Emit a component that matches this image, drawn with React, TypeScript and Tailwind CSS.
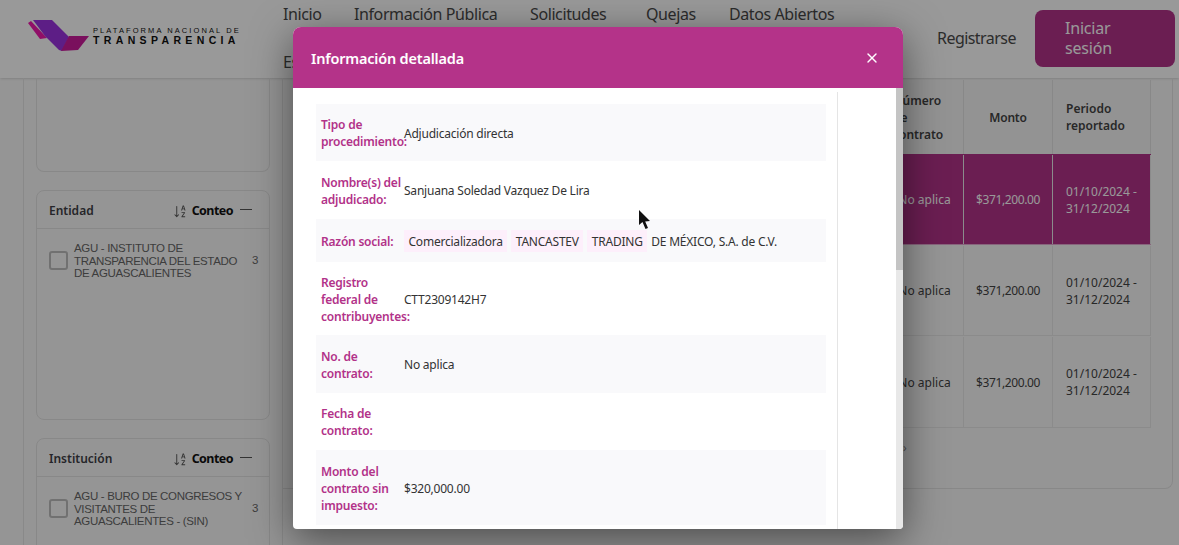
import { X } from "lucide-react";
import { BsSortAlphaDown } from "react-icons/bs";

const navItems = [
  { label: "Inicio", width: "w-[71px]" },
  { label: "Información Pública", width: "w-[176px]" },
  { label: "Solicitudes", width: "w-[116px]" },
  { label: "Quejas", width: "w-[83px]" },
  { label: "Datos Abiertos", width: "w-[120px]" },
  { label: "Es", width: "w-[120px]" },
];

const tableRows = [
  { selected: true, height: "h-[91px]" },
  { selected: false, height: "h-[91px]" },
  { selected: false, height: "h-[92px]" },
];

function Logo() {
  return (
    <div className="flex w-[283px] shrink-0 items-center pb-[6px] pl-[28px]">
      <svg width="62" height="34" viewBox="0 0 62 34" className="shrink-0">
        <polygon points="0,4 3,2 19,19 12,20" fill="#f01aae" />
        <polygon points="5,1 24,1 41,18 34,32 31,31 17,17" fill="#9c33e0" />
        <polygon points="41,17 61,17 50,31 33,32" fill="#cc1c9c" />
      </svg>
      <div className="pl-[3px] font-['Liberation_Sans',sans-serif] text-[#111]">
        <div className="text-[7.5px] leading-[9px] tracking-[2.08px]">PLATAFORMA NACIONAL DE</div>
        <div className="text-[10.5px] font-bold leading-[11px] tracking-[4.35px]">TRANSPARENCIA</div>
      </div>
    </div>
  );
}

function Header() {
  return (
    <header className="flex h-[78px] shrink-0 bg-white shadow-sm">
      <Logo />
      <nav className="flex w-[620px] shrink-0 flex-wrap content-start pt-[4px] text-[16px] leading-[20px] tracking-[-0.4px] text-[#4a4a4a]">
        {navItems.map((item) => (
          <a key={item.label} className={`${item.width} mb-[28px] whitespace-nowrap`}>
            {item.label}
          </a>
        ))}
      </nav>
      <div className="ml-[34px] flex w-[80px] items-center pb-[2px]">
        <span className="text-[16px] tracking-[-0.55px] text-[#4a4a4a]">Registrarse</span>
      </div>
      <div className="ml-[18px] pt-[10px]">
        <button className="h-[57px] w-[140px] rounded-lg bg-[#b23289] pb-[2px] pl-[30px] pr-[30px] text-left text-[16px] leading-[20px] tracking-[-0.2px] text-white">
          Iniciar sesión
        </button>
      </div>
    </header>
  );
}

function FilterCard({ title, item, height }: { title: string; item: string; height: string }) {
  return (
    <section className={`${height} shrink-0 rounded-lg border border-[#e3e3e3]`}>
      <div className="flex h-[38px] items-center border-b border-[#e3e3e3] pl-[12px] pr-[17px] pt-[3px] text-[12px] font-semibold text-[#3f3f46]">
        <span className="flex-1">{title}</span>
        <BsSortAlphaDown className="mr-[4px] size-[15px] text-[#555]" />
        <span className="text-[12.5px] font-bold tracking-[-0.55px] text-[#111]">Conteo</span>
        <span className="mb-[4px] ml-[7px] h-px w-[12px] bg-[#555]" />
      </div>
      <div className="flex items-center pl-[12px] pr-[11px] pt-[12px] font-['Liberation_Sans',sans-serif] text-[11.5px] leading-[12.5px] tracking-[-0.33px] text-[#666]">
        <span className="mr-[6px] size-[19px] shrink-0 rounded-[3px] border-2 border-[#bdbdbd]" />
        <span className="w-[172px] shrink-0 pt-[1px]">{item}</span>
        <span className="ml-auto">3</span>
      </div>
    </section>
  );
}

function Sidebar() {
  return (
    <aside className="flex w-[260px] shrink-0 flex-col gap-[18px] border-x border-[#e5e5e5] px-[12px]">
      <div className="h-[94px] shrink-0 rounded-b-lg border border-t-0 border-[#e3e3e3]" />
      <FilterCard
        title="Entidad"
        item="AGU - INSTITUTO DE TRANSPARENCIA DEL ESTADO DE AGUASCALIENTES"
        height="h-[230px]"
      />
      <FilterCard
        title="Institución"
        item="AGU - BURO DE CONGRESOS Y VISITANTES DE AGUASCALIENTES - (SIN)"
        height="h-[230px]"
      />
    </aside>
  );
}

function ResultsTable() {
  return (
    <main className="h-[411px] w-[890px] shrink-0 rounded-br-lg border-b border-r border-[#e3e3e3] pl-[22px] pt-[2px] font-['Noto_Sans',sans-serif] text-[12px] leading-[17px] text-[#444]">
      <div className="flex h-[74px] w-[846px] bg-[#f6f6f6] font-semibold">
        <div className="w-[581px] shrink-0" />
        <div className="flex w-[78px] items-center border-r border-[#e3e3e3] pl-[7px] pr-[14px]">Número de contrato</div>
        <div className="flex w-[89px] items-center justify-center border-r border-[#e3e3e3] tracking-[-0.2px]">Monto</div>
        <div className="flex w-[98px] items-center border-r border-[#e3e3e3] pl-[13px]">Periodo reportado</div>
      </div>
      {tableRows.map((row, i) => (
        <div
          key={i}
          className={`flex w-[846px] border-b pt-[1px] ${row.height} ${
            row.selected ? "border-[#e3a9d0] bg-[#b23289] text-white" : "border-[#e8e8e8]"
          }`}
        >
          <div className="w-[581px] shrink-0" />
          <div className="flex w-[78px] items-center justify-center border-r border-[#e8e8e8]">No aplica</div>
          <div className="flex w-[89px] items-center justify-center border-r border-[#e8e8e8] tracking-[-0.4px]">$371,200.00</div>
          <div className="flex w-[98px] items-center border-r border-[#e8e8e8] pl-[13px]">01/10/2024 - 31/12/2024</div>
        </div>
      ))}
      <div className="pl-[598px] pt-[11px] text-[#888]">›</div>
    </main>
  );
}

function DetailRow({
  label,
  shaded,
  children,
  className,
}: {
  label: string;
  shaded?: boolean;
  children?: React.ReactNode;
  className: string;
}) {
  return (
    <div className={`flex items-center pl-[5px] pt-[1px] ${className} ${shaded ? "bg-[#f9f9fb]" : "bg-white"}`}>
      <div className="w-[83px] shrink-0 font-semibold text-[#b23289]">{label}</div>
      <div className="text-[#333]">{children}</div>
    </div>
  );
}

function Chip({ children }: { children: React.ReactNode }) {
  return <span className="flex h-[22px] items-center bg-[#fdeffb] px-[4.5px]">{children}</span>;
}

function DetailModal() {
  return (
    <div className="absolute inset-0 bg-black/40">
      <div className="absolute left-[293px] top-[27px] flex h-[502px] w-[610px] flex-col overflow-hidden rounded-t-lg rounded-b-[4px] bg-white font-['Noto_Sans',sans-serif] shadow-[0_10px_40px_rgba(0,0,0,0.5)]">
        <div className="flex h-[61px] shrink-0 items-center justify-between bg-[#b43389] pl-[18px] pr-[23px] text-white">
          <h2 className="pt-[2px] text-[14.5px] font-semibold tracking-[-0.2px]">Información detallada</h2>
          <X className="size-[16px]" strokeWidth={2} />
        </div>
        <div className="flex min-h-0 flex-1">
          <div className="mt-[4px] w-[545px] shrink-0 overflow-hidden border-r border-[#e5e5e5] pl-[23px] pr-[11px] pt-[12px] text-[12px] leading-[17px] tracking-[-0.22px]">
            <DetailRow label="Tipo de procedimiento:" shaded className="h-[57px]">
              Adjudicación directa
            </DetailRow>
            <DetailRow label="Nombre(s) del adjudicado:" className="h-[58px]">
              Sanjuana Soledad Vazquez De Lira
            </DetailRow>
            <DetailRow label="Razón social:" shaded className="h-[43px]">
              <div className="flex items-center gap-[4px]">
                <Chip>Comercializadora</Chip>
                <Chip>TANCASTEV</Chip>
                <Chip>TRADING</Chip>
                <span>DE MÉXICO, S.A. de C.V.</span>
              </div>
            </DetailRow>
            <DetailRow label="Registro federal de contribuyentes:" className="h-[73px]">
              CTT2309142H7
            </DetailRow>
            <DetailRow label="No. de contrato:" shaded className="h-[58px]">
              No aplica
            </DetailRow>
            <DetailRow label="Fecha de contrato:" className="h-[57px]" />
            <DetailRow label="Monto del contrato sin impuesto:" shaded className="h-[75px]">
              $320,000.00
            </DetailRow>
          </div>
          <div className="ml-auto w-[7px] bg-[#e8e8e8]">
            <div className="h-[182px] bg-[#c4c4c4]" />
          </div>
        </div>
      </div>
      <svg width="14" height="22" viewBox="0 0 14 22" className="absolute left-[638px] top-[209px]">
        <path d="M1 1 L1 16 L4.5 13 L7.5 20 L10 19 L7.2 12.5 L12 12 Z" fill="#111" />
      </svg>
    </div>
  );
}

export default function App() {
  return (
    <div className="relative h-[545px] w-[1179px] overflow-hidden bg-[#f9f9f9] font-['Noto_Sans',sans-serif]">
      <Header />
      <div className="flex h-[467px] overflow-hidden pl-[23px]">
        <Sidebar />
        <ResultsTable />
      </div>
      <DetailModal />
    </div>
  );
}
